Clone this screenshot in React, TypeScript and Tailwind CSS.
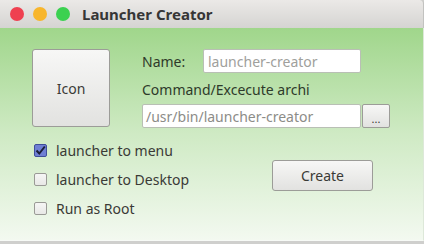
import { useState } from 'react';

function Check({ checked, label, onToggle }: { checked: boolean; label: string; onToggle: () => void }) {
  return (
    <label className="flex items-center h-[29px] cursor-default" onClick={onToggle}>
      <span
        className={
          checked
            ? 'w-[13px] h-[13px] rounded-[2px] border border-[#3f4d9a] bg-[#6f7fd4] flex items-center justify-center'
            : 'w-[13px] h-[13px] rounded-[2px] border border-[#9a9a96] bg-gradient-to-b from-[#f6f6f5] to-[#e8e8e6]'
        }
      >
        {checked && (
          <svg width="11" height="11" viewBox="0 0 11 11">
            <path d="M1.5 5.5 L4.3 8.5 L9.8 1.5" fill="none" stroke="#1b1f3a" strokeWidth="2" />
          </svg>
        )}
      </span>
      <span className="ml-[9px] text-[14px] text-[#3a3a36]">{label}</span>
    </label>
  );
}

export default function App() {
  const [menu, setMenu] = useState(true);
  const [desktop, setDesktop] = useState(false);
  const [root, setRoot] = useState(false);

  return (
    <div
      className="w-[424px] h-[244px] flex flex-col overflow-hidden bg-[#cfcfcd]"
      style={{ fontFamily: '"Noto Sans", "Open Sans", sans-serif' }}
    >
      {/* title bar */}
      <div className="h-[28px] flex items-center bg-gradient-to-b from-[#ebe9e7] to-[#d5d4d2] rounded-tr-[4px] border-r border-[#c2c2c0]">
        <span className="ml-[10px] w-[14px] h-[14px] rounded-full bg-[#ef4050]" />
        <span className="ml-[9px] w-[14px] h-[14px] rounded-full bg-[#f8b62c]" />
        <span className="ml-[9px] w-[14px] h-[14px] rounded-full bg-[#3bd150]" />
        <span className="ml-[12px] text-[15px] font-bold text-[#363636]">Launcher Creator</span>
      </div>

      {/* body */}
      <div className="h-[213px] bg-gradient-to-b from-[#a0d68b] via-[#cfeac4] to-[#f3f9f0] border-r border-[#dde8d9] border-b border-b-[#f7faf6] pl-[32px] pt-[21px] flex flex-col">
        <div className="flex">
          <button className="w-[78px] h-[78px] rounded-[3px] border border-[#9c9c98] bg-gradient-to-b from-[#f7f7f6] to-[#e2e2e0] text-[14px] text-[#3a3a36]">
            Icon
          </button>
          <div className="ml-[32px] flex flex-col">
            <div className="flex items-center h-[24px]">
              <span className="text-[14px] text-[#2e3a2a] w-[61px]">Name:</span>
              <div className="w-[158px] h-[24px] rounded-[2px] border border-[#b9bfb5] bg-white flex items-center px-[4px] text-[14px] text-[#a0a09c]">
                launcher-creator
              </div>
            </div>
            <div className="mt-[4px] h-[24px] flex items-center text-[14px] text-[#2e3a2a]">Command/Excecute archi</div>
            <div className="mt-[3px] flex">
              <div className="w-[219px] h-[24px] rounded-[2px] border border-[#b9bfb5] bg-white flex items-center px-[3px] text-[14px] text-[#8c8c88]">
                /usr/bin/launcher-creator
              </div>
              <button className="ml-[1px] w-[28px] h-[24px] rounded-[2px] border border-[#9c9c98] bg-gradient-to-b from-[#f7f7f6] to-[#e2e2e0] text-[11px] leading-none text-[#3a3a36] pt-[4px]">
                ...
              </button>
            </div>
          </div>
        </div>

        <div className="mt-[8px] flex">
          <div className="ml-[2px] w-[238px] flex flex-col">
            <Check checked={menu} label="launcher to menu" onToggle={() => setMenu(!menu)} />
            <Check checked={desktop} label="launcher to Desktop" onToggle={() => setDesktop(!desktop)} />
            <Check checked={root} label="Run as Root" onToggle={() => setRoot(!root)} />
          </div>
          <button className="mt-[24px] w-[101px] h-[31px] rounded-[3px] border border-[#9c9c98] bg-gradient-to-b from-[#f7f7f6] to-[#e2e2e0] text-[14px] text-[#3a3a36]">
            Create
          </button>
        </div>
      </div>
    </div>
  );
}
